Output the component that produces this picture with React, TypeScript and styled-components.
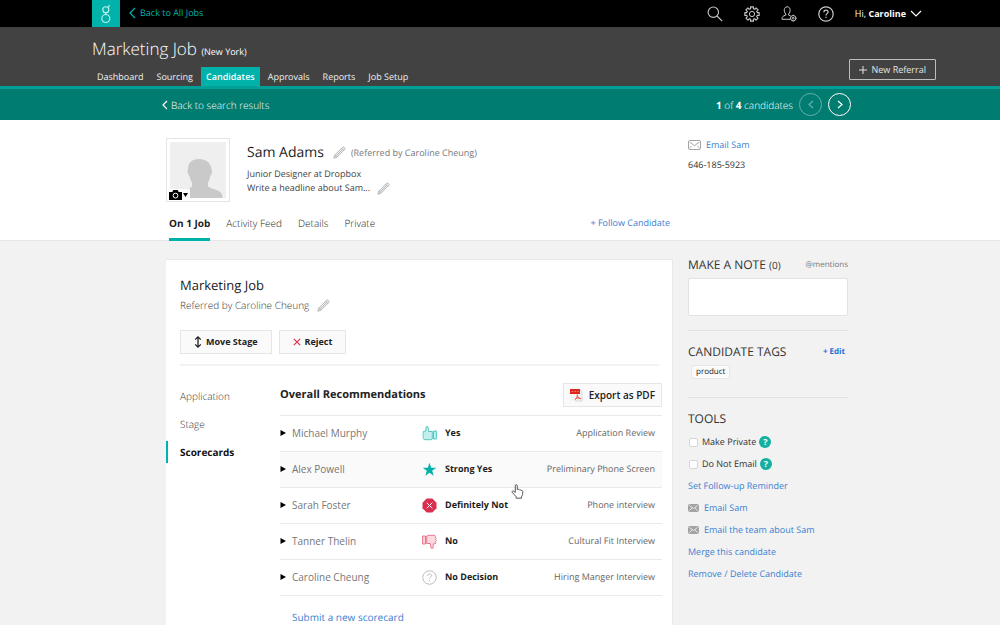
import React from "react";
import styled, { createGlobalStyle, css } from "styled-components";

const teal = "#00b2a9";
const blue = "#3b7fd1";

const GlobalStyle = createGlobalStyle`
  * { box-sizing: border-box; }
  body {
    margin: 0;
    background: #f2f2f2;
    color: #333;
    font-family: "Open Sans", "Liberation Sans", sans-serif;
    font-size: 10px;
    line-height: 14px;
    text-rendering: geometricPrecision;
  }
  h1, h2, h3, p, ul { margin: 0; padding: 0; font-weight: 400; }
  ul { list-style: none; }
  a { color: inherit; text-decoration: none; }
  button, input, textarea { font: inherit; color: inherit; margin: 0; }
  button { cursor: pointer; }
  svg { display: block; flex: none; }
`;

const Page = styled.div`
  display: flex;
  flex-direction: column;
  min-height: 100vh;
`;

/* ---------- top bar ---------- */
const TopBar = styled.header`
  display: flex;
  align-items: center;
  height: 27px;
  padding: 0 78px 0 92px;
  background: #000;
  font-size: 9px;
`;
const Logo = styled.a`
  display: flex;
  align-items: center;
  justify-content: center;
  width: 28px;
  height: 27px;
  background: ${teal};
`;
const AllJobsLink = styled.a`
  display: flex;
  align-items: center;
  gap: 4px;
  margin: 0 auto 2px 9px;
  color: ${teal};
`;
const TopIcons = styled.nav`
  display: flex;
  align-items: center;
  gap: 21px;
`;
const IconButton = styled.button`
  display: flex;
  padding: 0;
  border: 0;
  background: none;
  color: #c9c9c9;
`;
const UserMenu = styled.button`
  display: flex;
  align-items: center;
  gap: 4px;
  margin-left: 21px;
  padding: 0;
  border: 0;
  background: none;
  color: #fff;
  b { font-weight: 700; }
`;

/* ---------- job header ---------- */
const JobHeader = styled.div`
  display: flex;
  justify-content: space-between;
  height: 62px;
  padding: 0 64px 0 92px;
  background: #424242;
  border-bottom: 3px solid #00a099;
  font-size: 9px;
`;
const JobTitle = styled.h1`
  height: 40px;
  padding-top: 10px;
  font-size: 17px;
  line-height: 24px;
  color: #fff;
  font-weight: 300;
  small { font-size: 9px; font-weight: 400; }
`;
const JobTabs = styled.nav`
  display: flex;
  gap: 3px;
`;
const JobTab = styled.a<{ $active?: boolean }>`
  height: 19px;
  padding: 0 5px;
  line-height: 19px;
  color: #f0f0f0;
  ${(p) => p.$active && css`
    background: ${teal};
    color: #fff;
    font-weight: 600;
  `}
`;
const ReferralButton = styled.button`
  display: flex;
  align-items: center;
  align-self: flex-end;
  gap: 5px;
  height: 21px;
  margin-bottom: 6px;
  padding: 0 9px;
  border: 1px solid #bdbdbd;
  border-radius: 1px;
  background: none;
  color: #e4e4e4;
`;

/* ---------- search result strip ---------- */
const ResultStrip = styled.div`
  display: flex;
  align-items: center;
  justify-content: space-between;
  height: 31px;
  padding: 0 149px 0 162px;
  background: #007d70;
  color: #fff;
  font-weight: 300;
`;
const BackLink = styled.a`
  display: flex;
  align-items: center;
  gap: 3px;
`;
const Pager = styled.div`
  display: flex;
  align-items: center;
  gap: 6px;
  b { font-weight: 700; }
`;
const PagerButton = styled.button`
  display: flex;
  align-items: center;
  justify-content: center;
  width: 23px;
  height: 23px;
  padding: 0;
  border: 1px solid #fff;
  border-radius: 50%;
  background: none;
  color: #fff;
  &:disabled { border-color: #66b0a8; color: #66b0a8; }
`;

/* ---------- shared columns ---------- */
const Columns = styled.div`
  display: flex;
  gap: 15px;
  padding: 0 152px 0 166px;
`;
const MainColumn = styled.div`
  flex: 1;
  min-width: 0;
`;
const SideColumn = styled.aside`
  flex: none;
  width: 160px;
  font-size: 9px;
`;
const ToolColumn = styled(SideColumn)`
  padding-top: 3px;
`;

/* ---------- profile ---------- */
const Profile = styled.section`
  background: #fff;
  border-bottom: 1px solid #e6e6e6;
`;
const Identity = styled.div`
  display: flex;
  gap: 17px;
  height: 86px;
  padding-top: 18px;
  font-size: 9px;
`;
const Avatar = styled.div`
  position: relative;
  width: 64px;
  height: 64px;
  padding: 3px;
  border: 1px solid #e4e4e4;
`;
const PhotoButton = styled.button`
  position: absolute;
  left: 1px;
  bottom: 0;
  display: flex;
  align-items: center;
  gap: 1px;
  height: 12px;
  padding: 0 2px 0 1px;
  border: 0;
  background: #fff;
  color: #000;
`;
const NameRow = styled.div`
  display: flex;
  align-items: center;
  gap: 9px;
  height: 29px;
  color: #777;
  span { margin-left: -4px; }
`;
const Name = styled.h2`
  font-size: 14px;
  line-height: 20px;
  color: #1c1c1c;
`;
const Headline = styled.p`
  display: flex;
  align-items: center;
  gap: 7px;
  color: #444;
`;
const ProfileTabs = styled.nav`
  display: flex;
  align-items: flex-start;
  gap: 16px;
  height: 34px;
  padding: 10px 3px 0;
  color: #222;
  font-weight: 300;
`;
const ProfileTab = styled.a<{ $active?: boolean }>`
  height: 25px;
  ${(p) => p.$active && css`
    color: #1c1c1c;
    font-weight: 700;
    border-bottom: 3px solid ${teal};
  `}
`;
const TextLink = styled.a`
  display: flex;
  align-items: center;
  gap: 5px;
  color: ${blue};
`;
const FollowLink = styled(TextLink)`
  margin-left: auto;
  font-size: 9px;
  font-weight: 400;
`;
const Contact = styled.div`
  display: flex;
  flex-direction: column;
  gap: 6px;
  padding-top: 18px;
  color: #333;
`;

/* ---------- card ---------- */
const Body = styled(Columns)`
  flex: 1;
`;
const Card = styled.main`
  flex: 1;
  min-width: 0;
  margin-top: 18px;
  padding: 15px 10px 24px 14px;
  background: #fff;
  border: 1px solid #e8e8e8;
  border-bottom: 0;
  border-left: 0;
`;
const CardTitle = styled.h2`
  font-size: 13px;
  line-height: 20px;
  color: #1c1c1c;
`;
const Referred = styled.p`
  display: flex;
  align-items: center;
  gap: 8px;
  height: 20px;
  color: #333;
  font-weight: 300;
`;
const Actions = styled.div`
  display: flex;
  gap: 7px;
  margin: 15px 3px 0 0;
  padding-bottom: 10px;
  border-bottom: 2px solid #f2f2f2;
`;
const BoxButton = styled.button`
  display: flex;
  align-items: center;
  gap: 4px;
  height: 24px;
  padding: 0 13px;
  border: 1px solid #e6e6e6;
  background: #fafafa;
  color: #222;
  font-size: 9px;
  font-weight: 700;
`;
const ExportButton = styled(BoxButton)`
  gap: 6px;
  padding: 0 6px 0 5px;
  font-size: 10px;
  font-weight: 600;
`;
const CardBody = styled.div`
  display: flex;
`;
const CardNav = styled.nav`
  flex: none;
  width: 114px;
  margin: 19px 0 0 -14px;
`;
const CardNavLink = styled.a<{ $active?: boolean }>`
  display: block;
  height: 22px;
  margin-bottom: 6px;
  padding-left: 12px;
  border-left: 2px solid transparent;
  line-height: 22px;
  color: #333;
  font-weight: 300;
  ${(p) => p.$active && css`
    border-color: ${teal};
    color: #111;
    font-weight: 700;
  `}
`;
const Scorecards = styled.section`
  position: relative;
  flex: 1;
  min-width: 0;
  padding-top: 17px;
`;
const ScoreHead = styled.div`
  display: flex;
  align-items: center;
  justify-content: space-between;
  height: 32px;
  padding: 0 0 8px;
  h3 { font-size: 11px; font-weight: 700; color: #222; }
`;
const ScoreTable = styled.table`
  width: 100%;
  border-collapse: collapse;
  border-bottom: 1px solid #e9e9e9;
`;
const ScoreRow = styled.tr<{ $hover?: boolean }>`
  height: 36px;
  border-top: 1px solid #e9e9e9;
  background: ${(p) => (p.$hover ? "#fafafa" : "transparent")};
`;
const NameCell = styled.td`
  width: 142px;
  padding: 0 0 1px;
  color: #777;
`;
const Disclosure = styled.button`
  display: flex;
  align-items: center;
  gap: 6px;
  padding: 0;
  border: 0;
  background: none;
  svg { color: #000; }
`;
const VerdictCell = styled.td`
  padding: 0 0 1px;
  color: #1c1c1c;
  font-size: 9px;
  font-weight: 700;
`;
const Verdict = styled.span`
  display: flex;
  align-items: center;
  gap: 8px;
`;
const StageCell = styled.td`
  padding: 0 7px 1px 0;
  text-align: right;
  color: #666;
  font-size: 9px;
`;
const SubmitLink = styled(TextLink)`
  margin: 14px 0 0 12px;
`;
const Pointer = styled.svg`
  position: absolute;
  left: 231px;
  top: 118px;
`;

/* ---------- sidebar ---------- */
const Panel = styled.section`
  padding: 12px 0 0;
  & + & { border-top: 1px solid #e2e2e2; }
`;
const PanelHead = styled.div`
  display: flex;
  align-items: center;
  justify-content: space-between;
  height: 18px;
`;
const PanelTitle = styled.h3`
  font-size: 12px;
  line-height: 18px;
  color: #333;
  small { font-size: 10px; }
`;
const Mentions = styled.span`
  font-size: 8px;
  color: #777;
`;
const EditLink = styled.a`
  padding-right: 3px;
  font-size: 8px;
  font-weight: 700;
  color: #1b6fd6;
`;
const NoteBox = styled.textarea`
  display: block;
  width: 100%;
  height: 38px;
  margin: 4px 0 14px;
  border: 1px solid #e2e2e2;
  border-radius: 2px;
  background: #fff;
  resize: none;
`;
const Tag = styled.span`
  display: block;
  width: fit-content;
  margin: 4px 0 18px 3px;
  padding: 0 4px;
  border: 1px solid #e6e6e6;
  border-radius: 2px;
  background: #fafafa;
  font-size: 8px;
  line-height: 12px;
  color: #222;
`;
const ToolList = styled.ul`
  padding-top: 3px;
`;
const Tool = styled.li`
  display: flex;
  align-items: center;
  gap: 3px;
  height: 22px;
`;
const CheckLabel = styled.label`
  display: flex;
  align-items: center;
  gap: 4px;
  color: #333;
`;
const Check = styled.input`
  appearance: none;
  width: 9px;
  height: 9px;
  margin-left: 1px;
  border: 1px solid #d6d6d6;
  border-radius: 2px;
  background: #fff;
`;
const Help = styled.button`
  width: 12px;
  height: 12px;
  padding: 0;
  border: 0;
  border-radius: 50%;
  background: #12b0a0;
  color: #fff;
  font-size: 9px;
  font-weight: 700;
  line-height: 12px;
`;

/* ---------- icons ---------- */
const Chevron = ({ dir, w, h }: { dir: "left" | "right" | "down"; w: number; h: number }) => {
  const d = {
    left: `M${w - 1} 1L1 ${h / 2}L${w - 1} ${h - 1}`,
    right: `M1 1L${w - 1} ${h / 2}L1 ${h - 1}`,
    down: `M1 1L${w / 2} ${h - 1}L${w - 1} 1`,
  }[dir];
  return (
    <svg width={w} height={h} fill="none" stroke="currentColor" strokeWidth="1.2"><path d={d} /></svg>
  );
};

const LogoMark = () => (
  <svg width="14" height="22" viewBox="0 0 14 22" fill="none" stroke="#c9f3ef" strokeWidth="1.1">
    <circle cx="6.800" cy="6.700" r="3" />
    <circle cx="6.800" cy="15.500" r="4" />
    <path d="M8.800 4.500c1-.4 1.500-1.100 1.400-2.600M6.800 9.700v1.800" />
  </svg>
);

const SearchIcon = () => (
  <svg width="16" height="16" viewBox="0 0 16 16" fill="none" stroke="currentColor" strokeWidth="1.1">
    <circle cx="6.300" cy="6.200" r="5.200" /><path d="M10 10l5.200 5.200" />
  </svg>
);

const gearPath = (() => {
  const pts: string[] = [];
  for (let i = 0; i < 8; i++) {
    const base = (i * Math.PI) / 4;
    [[-0.26, 5.4], [-0.2, 7.3], [0.2, 7.3], [0.26, 5.4]].forEach(([a, r]) => {
      pts.push(`${(8 + r * Math.sin(base + a)).toFixed(2)} ${(8 - r * Math.cos(base + a)).toFixed(2)}`);
    });
  }
  return `M${pts.join("L")}Z`;
})();

const GearIcon = () => (
  <svg width="16" height="16" viewBox="0 0 16 16" fill="none" stroke="currentColor" strokeLinejoin="round">
    <path d={gearPath} strokeWidth="1.100" /><circle cx="8" cy="8" r="2.600" />
  </svg>
);

const UserIcon = () => (
  <svg width="16" height="16" viewBox="0 0 16 16" fill="none" stroke="currentColor">
    <path d="M9.300 13.300H1c0-2.700 1-3.300 3.800-4.200V8C3.500 6.700 3.200 5.300 3.300 3.700 3.400 2 4.500.8 6.200.8S9 2 9.100 3.700C9.200 5.300 8.900 6.700 7.600 8v1.100l2 .8" />
    <circle cx="12.200" cy="12.200" r="2.700" /><circle cx="12.200" cy="12.200" r=".9" />
    <path d="M12.200 8.800v1M12.200 14.600v1M8.800 12.200h1M14.600 12.200h1" />
  </svg>
);

const QuestionIcon = ({ size, stroke, bold }: { size: number; stroke: string; bold?: boolean }) => (
  <svg width={size} height={size} viewBox="0 0 16 16" fill="none" stroke={stroke} strokeWidth={bold ? 1.2 : 1}>
    <circle cx="8" cy="8" r="7.200" />
    <path d="M5.900 6.300C5.900 4.900 6.800 4.200 8 4.200s2.100.8 2.100 1.900C10.100 7.600 8 7.700 8 9.400M8 10.700v1.300" />
  </svg>
);

const Pencil = () => (
  <svg width="13" height="13" viewBox="0 0 13 13" fill="#f0f0f0" stroke="#a8a8a8" strokeWidth=".8" strokeLinejoin="round">
    <path d="M.8 12.200l.9-3L9.600 1.200c.5-.5 1-.5 1.500 0l.7.7c.5.5.5 1 0 1.500L3.900 11.300zM8.700 2.100l2.200 2.200M1.700 9.200l2.200 2.100M3 10.200l6.800-7" />
  </svg>
);

const Silhouette = () => (
  <svg width="56" height="56" viewBox="0 0 56 56">
    <rect width="56" height="56" fill="#efefef" />
    <path d="M29 17c-7 0-11 4-11 10 0 1-.8 1.500-.5 3 .3 1.800 1.300 3 2 4 .5 3 1.500 5 2.500 6.500v4C19 47.500 12 48 9 52c-1 1.300-1.500 2.500-1.500 4h45c0-2.500-.5-5-3-6.500-4-2.300-8-2.700-11.500-5v-4c1.300-1.700 2-4 2.300-6.500.9-1 1.600-2.300 1.700-4 .1-1.500-.6-2-.5-3.500C40.500 21 36 17 29 17z" fill="#c9c9c9" />
  </svg>
);

const Camera = () => (
  <svg width="13" height="10" viewBox="0 0 13 10">
    <path d="M0 2h3.300L4.300 0h4.400l1 2H13v8H0z" fill="#000" />
    <circle cx="6.500" cy="5.600" r="2.400" fill="none" stroke="#fff" />
  </svg>
);

const Caret = () => (
  <svg width="5" height="4" viewBox="0 0 5 4"><path d="M0 0h5L2.500 4z" fill="#000" /></svg>
);

const Envelope = () => (
  <svg width="13" height="10" viewBox="0 0 13 10" fill="none" stroke="#999" strokeWidth=".9">
    <rect x=".5" y=".5" width="12" height="9" rx="1.200" /><path d="M1.500 2l5 3.600L11.500 2M1.500 8l2-1.800M11.500 8l-2-1.800" />
  </svg>
);

const EnvelopeSolid = () => (
  <svg width="11" height="8" viewBox="0 0 11 8">
    <rect width="11" height="8" rx="2" fill="#a3a3a3" />
    <path d="M1.500 1.500l4 3 4-3M1.500 6.500L4 4M9.500 6.500L7 4" fill="none" stroke="#f2f2f2" strokeWidth=".9" />
  </svg>
);

const MoveIcon = () => (
  <svg width="8" height="12" viewBox="0 0 8 12" fill="none" stroke="#222" strokeWidth="1.300">
    <path d="M4 1v10M1.200 3.600L4 .9l2.800 2.700M1.200 8.400L4 11.100l2.800-2.700" />
  </svg>
);

const RejectIcon = () => (
  <svg width="8" height="8" viewBox="0 0 8 8" stroke="#e0304e" strokeWidth="1.200">
    <path d="M.8.8l6.400 6.400M7.200.8L.8 7.200" />
  </svg>
);

const PdfIcon = () => (
  <svg width="14" height="14" viewBox="0 0 14 14">
    <path d="M2 1h8l3 3v9H2z" fill="#f5f5f5" />
    <path d="M10 1l3 3v9H6" fill="none" stroke="#d2d2d2" strokeWidth=".8" />
    <rect x="1" y="1" width="10" height="5" fill="#e0261b" />
    <path d="M2.500 3.500h1.800M5.500 3.500h1.600M8.300 3.500h1.400" stroke="#f6a09a" strokeWidth=".7" />
    <path d="M8.300 6.500c.4 2-.8 4-2.400 5.400M8.300 7.500c.5 1.800 1.700 3 3.700 3.300M6.500 10.500c1.500-.6 3-.7 4.500-.2" fill="none" stroke="#e5463c" strokeWidth=".9" />
  </svg>
);

const Thumb = ({ down }: { down?: boolean }) => (
  <svg width="15" height="15" viewBox="0 0 15 15" fill={down ? "#fbd9df" : "#c5efec"} stroke={down ? "#e66a80" : "#3fc4bc"} strokeWidth=".9" strokeLinejoin="round">
    <g transform={down ? "rotate(180 7.5 7.5)" : undefined}>
      <path d="M10.300 5.500H6.700C6.400 4 6.300 2 5.900.9 5.500.2 4 .3 3.900 1.300c-.1 1.500.3 2.700-.2 3.900H2c-1 .2-1.200 1.500-.4 2C.6 7.700.5 9 1.400 9.500.6 10 .7 11.300 1.600 11.700c-.4.9 0 1.900 1.100 2h6l1.600-.7z" />
      <path d="M11.500 5h2.900v8h-2.900z" />
    </g>
  </svg>
);

const Star = () => (
  <svg width="15" height="15" viewBox="0 0 15 15">
    <path d="M7.500.8l1.700 4.900h5.100l-4.100 3.100 1.500 5-4.200-3-4.200 3 1.500-5L.7 5.700h5.100z" fill={teal} />
  </svg>
);

const Stop = () => (
  <svg width="15" height="15" viewBox="0 0 15 15">
    <path d="M4.700.5h5.600l4.200 4.200v5.600l-4.200 4.200H4.700L.5 10.300V4.700z" fill="#d9304f" />
    <path d="M4.700 4.700l5.600 5.600M10.300 4.700l-5.600 5.600" stroke="#fff" strokeWidth="1" />
  </svg>
);

const Plus = () => (
  <svg width="8" height="8" viewBox="0 0 8 8" stroke="currentColor"><path d="M4 0v8M0 4h8" /></svg>
);

const Triangle = () => (
  <svg width="6" height="6" viewBox="0 0 6 6"><path d="M.5 0L6 3 .5 6z" fill="currentColor" /></svg>
);

const rows = [
  { name: "Michael Murphy", icon: <Thumb />, verdict: "Yes", stage: "Application Review" },
  { name: "Alex Powell", icon: <Star />, verdict: "Strong Yes", stage: "Preliminary Phone Screen", hover: true },
  { name: "Sarah Foster", icon: <Stop />, verdict: "Definitely Not", stage: "Phone interview" },
  { name: "Tanner Thelin", icon: <Thumb down />, verdict: "No", stage: "Cultural Fit Interview" },
  { name: "Caroline Cheung", icon: <QuestionIcon size={15} stroke="#b8b8b8" />, verdict: "No Decision", stage: "Hiring Manger Interview" },
];

const jobTabs = ["Dashboard", "Sourcing", "Candidates", "Approvals", "Reports", "Job Setup"];
const profileTabs = ["On 1 Job", "Activity Feed", "Details", "Private"];
const cardTabs = ["Application", "Stage", "Scorecards"];

export default function App() {
  return (
    <Page>
      <GlobalStyle />
      <TopBar>
        <Logo href="#" aria-label="Home"><LogoMark /></Logo>
        <AllJobsLink href="#"><Chevron dir="left" w={7} h={12} />Back to All Jobs</AllJobsLink>
        <TopIcons>
          <IconButton aria-label="Search"><SearchIcon /></IconButton>
          <IconButton aria-label="Settings"><GearIcon /></IconButton>
          <IconButton aria-label="Users"><UserIcon /></IconButton>
          <IconButton aria-label="Help"><QuestionIcon size={16} stroke="currentColor" bold /></IconButton>
        </TopIcons>
        <UserMenu><span>Hi, <b>Caroline</b></span><Chevron dir="down" w={12} h={7} /></UserMenu>
      </TopBar>

      <JobHeader>
        <div>
          <JobTitle>Marketing Job <small>(New York)</small></JobTitle>
          <JobTabs>
            {jobTabs.map((t) => <JobTab key={t} href="#" $active={t === "Candidates"}>{t}</JobTab>)}
          </JobTabs>
        </div>
        <ReferralButton><Plus />New Referral</ReferralButton>
      </JobHeader>

      <ResultStrip>
        <BackLink href="#"><Chevron dir="left" w={6} h={10} />Back to search results</BackLink>
        <Pager>
          <span><b>1</b> of <b>4</b> candidates</span>
          <PagerButton disabled aria-label="Previous"><Chevron dir="left" w={6} h={9} /></PagerButton>
          <PagerButton aria-label="Next"><Chevron dir="right" w={6} h={9} /></PagerButton>
        </Pager>
      </ResultStrip>

      <Profile>
        <Columns>
          <MainColumn>
            <Identity>
              <Avatar>
                <Silhouette />
                <PhotoButton aria-label="Change photo"><Camera /><Caret /></PhotoButton>
              </Avatar>
              <div>
                <NameRow><Name>Sam Adams</Name><Pencil /><span>(Referred by Caroline Cheung)</span></NameRow>
                <Headline>Junior Designer at Dropbox</Headline>
                <Headline>Write a headline about Sam... <Pencil /></Headline>
              </div>
            </Identity>
            <ProfileTabs>
              {profileTabs.map((t, i) => <ProfileTab key={t} href="#" $active={i === 0}>{t}</ProfileTab>)}
              <FollowLink href="#">+ Follow Candidate</FollowLink>
            </ProfileTabs>
          </MainColumn>
          <SideColumn>
            <Contact>
              <TextLink href="#"><Envelope />Email Sam</TextLink>
              <span>646-185-5923</span>
            </Contact>
          </SideColumn>
        </Columns>
      </Profile>

      <Body>
        <Card>
          <CardTitle>Marketing Job</CardTitle>
          <Referred>Referred by Caroline Cheung <Pencil /></Referred>
          <Actions>
            <BoxButton><MoveIcon />Move Stage</BoxButton>
            <BoxButton><RejectIcon />Reject</BoxButton>
          </Actions>
          <CardBody>
            <CardNav>
              {cardTabs.map((t, i) => <CardNavLink key={t} href="#" $active={i === 2}>{t}</CardNavLink>)}
            </CardNav>
            <Scorecards>
              <ScoreHead>
                <h3>Overall Recommendations</h3>
                <ExportButton><PdfIcon />Export as PDF</ExportButton>
              </ScoreHead>
              <ScoreTable>
                <tbody>
                  {rows.map((r) => (
                    <ScoreRow key={r.name} $hover={r.hover}>
                      <NameCell><Disclosure><Triangle />{r.name}</Disclosure></NameCell>
                      <VerdictCell><Verdict>{r.icon}{r.verdict}</Verdict></VerdictCell>
                      <StageCell>{r.stage}</StageCell>
                    </ScoreRow>
                  ))}
                </tbody>
              </ScoreTable>
              <SubmitLink href="#">Submit a new scorecard</SubmitLink>
              <Pointer width="13" height="15" viewBox="0 0 13 15" fill="#fff" stroke="#555" strokeWidth="1" strokeLinejoin="round">
                <path d="M4.300 8.500V1.700c0-1.400 2-1.400 2 0v3.800c1-.5 1.700-.2 2 .4.800-.4 1.500-.1 1.800.6.900-.3 1.700.1 1.700 1.100 0 2-.3 3.700-1.300 5.200v1.400H5.200v-1.400C3.700 11.300 2.600 9.800 1.200 8.300.5 7.300 1.800 6.500 2.700 7.200z" />
              </Pointer>
            </Scorecards>
          </CardBody>
        </Card>

        <ToolColumn>
          <Panel>
            <PanelHead>
              <PanelTitle>MAKE A NOTE <small>(0)</small></PanelTitle>
              <Mentions>@mentions</Mentions>
            </PanelHead>
            <NoteBox aria-label="Make a note" />
          </Panel>
          <Panel>
            <PanelHead>
              <PanelTitle>CANDIDATE TAGS</PanelTitle>
              <EditLink href="#">+ Edit</EditLink>
            </PanelHead>
            <Tag>product</Tag>
          </Panel>
          <Panel>
            <PanelTitle>TOOLS</PanelTitle>
            <ToolList>
              <Tool><CheckLabel><Check type="checkbox" />Make Private</CheckLabel><Help aria-label="About private">?</Help></Tool>
              <Tool><CheckLabel><Check type="checkbox" />Do Not Email</CheckLabel><Help aria-label="About do not email">?</Help></Tool>
              <Tool><TextLink href="#">Set Follow-up Reminder</TextLink></Tool>
              <Tool><TextLink href="#"><EnvelopeSolid />Email Sam</TextLink></Tool>
              <Tool><TextLink href="#"><EnvelopeSolid />Email the team about Sam</TextLink></Tool>
              <Tool><TextLink href="#">Merge this candidate</TextLink></Tool>
              <Tool><TextLink href="#">Remove / Delete Candidate</TextLink></Tool>
            </ToolList>
          </Panel>
        </ToolColumn>
      </Body>
    </Page>
  );
}
